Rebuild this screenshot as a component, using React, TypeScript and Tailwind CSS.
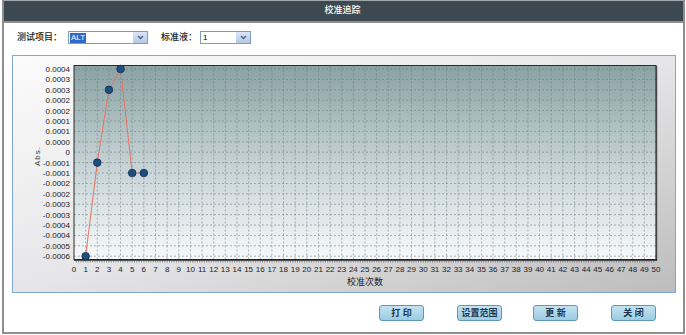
import React from 'react';

const cjk = "font-['Liberation_Sans','Noto_Sans_CJK_SC',sans-serif]";

const yLabels = [
  '0.0004', '0.0003', '0.0003', '0.0002', '0.0002', '0.0001', '0.0001', '0.0000', '0',
  '-0.0001', '-0.0001', '-0.0002', '-0.0002', '-0.0003', '-0.0003', '-0.0004', '-0.0004', '-0.0005', '-0.0006',
];
// [校准次数, 标签行]
const points: [number, number][] = [[1, 18], [2, 9], [3, 2], [4, 0], [5, 10], [6, 10]];

const px = (i: number) => 74 + i * 11.64;
const py = (i: number) => 69 + i * 10.4;

const SelectBox: React.FC<{ value: string; width: string; selected?: boolean }> = ({ value, width, selected }) => (
  <div className={`${width} h-[13px] border border-[#7f9db9] bg-white flex items-center relative`}>
    <span
      className={`ml-[1px] h-[10px] leading-[10px] text-[8px] px-[1px] ${selected ? 'bg-[#3169c6] text-white' : 'text-black'}`}
    >
      {value}
    </span>
    <div className="absolute right-0 top-0 w-[14px] h-[11px] bg-linear-to-b from-[#dce7f7] to-[#b4c8e6] flex items-center justify-center">
      <svg width="7" height="5" viewBox="0 0 7 5">
        <path d="M1 1 L3.5 3.5 L6 1" stroke="#4d6185" strokeWidth="1.4" fill="none" />
      </svg>
    </div>
  </div>
);

const Btn: React.FC<{ label: string; className?: string }> = ({ label, className }) => (
  <button
    className={`w-[45px] h-[16px] rounded-[3px] border border-[#5e97ba] bg-linear-to-b from-[#c2e3f1] to-[#9ccbe1] text-[9px] leading-[14px] font-bold text-[#1b3550] ${className ?? ''}`}
  >
    {label}
  </button>
);

const Chart: React.FC = () => {
  const minor: number[] = [];
  for (let k = 1; k < 250; k++) minor.push(74 + k * (11.64 / 5));
  const line = points.map(([x, y]) => `${px(x)},${py(y)}`).join(' ');
  const font = "'Liberation Sans', Arial, sans-serif";

  return (
    <svg width={662} height={236} viewBox="13 56 662 236">
      <defs>
        <linearGradient id="plotBg" x1="0" y1="0" x2="0" y2="1">
          <stop offset="0" stopColor="#8aa2a4" />
          <stop offset="0.45" stopColor="#bfcdd0" />
          <stop offset="1" stopColor="#f7f9fa" />
        </linearGradient>
      </defs>

      {/* 绘图区 */}
      <rect x={74} y={65.5} width={582} height={194} fill="url(#plotBg)" />
      {yLabels.map((_, i) => (
        <line key={'h' + i} x1={74} x2={656} y1={py(i)} y2={py(i)} stroke="#6b7b7d" strokeWidth={0.8} strokeDasharray="2 2" opacity={0.7} />
      ))}
      {Array.from({ length: 49 }, (_, k) => k + 1).map((k) => (
        <line key={'v' + k} x1={px(k)} x2={px(k)} y1={65.5} y2={259.5} stroke="#6b7b7d" strokeWidth={0.8} strokeDasharray="2 2" opacity={0.7} />
      ))}
      <rect x={74} y={65.5} width={582} height={194} fill="none" stroke="#2b2b2b" strokeWidth={1} />
      <line x1={656.5} x2={656.5} y1={66} y2={260.5} stroke="#444" strokeWidth={1.4} />
      <line x1={74} x2={657} y1={260} y2={260} stroke="#222" strokeWidth={1.4} />
      {minor.map((x, k) => (
        <line key={'t' + k} x1={x} x2={x} y1={260.5} y2={262.5} stroke="#555" strokeWidth={0.6} />
      ))}

      {/* Y 轴刻度 */}
      {yLabels.map((t, i) => (
        <text key={'yl' + i} x={70} y={py(i) + 3} textAnchor="end" fontSize={8} fill="#222" fontFamily={font}>
          {t}
        </text>
      ))}
      {/* X 轴刻度 */}
      {Array.from({ length: 51 }, (_, k) => k).map((k) => (
        <text key={'xl' + k} x={px(k)} y={271.5} textAnchor="middle" fontSize={8} fill="#222" fontFamily={font}>
          {k}
        </text>
      ))}
      <text x={365} y={285} textAnchor="middle" fontSize={9} fill="#222" fontFamily="'Noto Sans CJK SC', sans-serif">
        校准次数
      </text>
      <text
        x={38}
        y={156}
        transform="rotate(-90 38 156)"
        textAnchor="middle"
        dominantBaseline="middle"
        fontSize={8}
        letterSpacing={1}
        fill="#333"
        fontFamily={font}
      >
        Abs.
      </text>

      {/* 数据 */}
      <polyline points={line} fill="none" stroke="#e8735f" strokeWidth={1} />
      {points.map(([x, y], k) => (
        <circle key={'p' + k} cx={px(x)} cy={py(y)} r={3.8} fill="#1d4f80" stroke="#0e2c4d" strokeWidth={0.8} />
      ))}
    </svg>
  );
};

export default function App() {
  return (
    <div className={`w-[686px] h-[335px] bg-white ${cjk}`}>
      <div className="ml-[2px] w-[683px] h-[334px] border-x-2 border-b-2 border-[#8e8e8e] flex flex-col">
        {/* 标题栏 */}
        <div className="h-[23px] bg-[#3d4951] border-t border-t-[#a2a8ac] border-b-2 border-b-[#8e8e8e] flex items-center justify-center">
          <span className="text-[9px] text-white font-medium ml-[-2px]">校准追踪</span>
        </div>

        {/* 选择条件 */}
        <div className="h-[32px] pt-[8px] pl-[13px] flex items-start">
          <span className="w-[51px] h-[13px] leading-[13px] text-[9px] font-medium text-[#222]">测试项目：</span>
          <SelectBox value="ALT" width="w-[80px]" selected />
          <span className="ml-[13px] w-[39px] h-[13px] leading-[13px] text-[9px] font-medium text-[#222]">标准液：</span>
          <SelectBox value="1" width="w-[51px]" />
        </div>

        {/* 图表 */}
        <div className="ml-[8px] w-[664px] h-[238px] border border-[#7ea7d8] bg-linear-to-br from-[#fbfbfb] via-[#e6e6e8] to-[#bdbdbd]">
          <Chart />
        </div>

        {/* 按钮 */}
        <div className="mt-[12px] ml-[375px] flex">
          <Btn label="打 印" />
          <Btn label="设置范围" className="ml-[33px]" />
          <Btn label="更 新" className="ml-[31px]" />
          <Btn label="关 闭" className="ml-[33px]" />
        </div>
      </div>
    </div>
  );
}
